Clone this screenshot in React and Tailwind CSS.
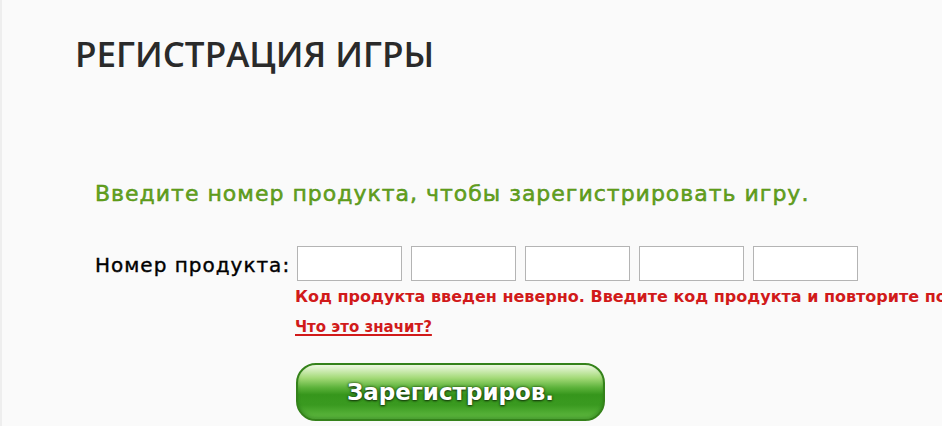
export default function App() {
  const boxes = [0, 1, 2, 3, 4];

  return (
    <div className="w-[942px] h-[426px] overflow-hidden bg-[#fafafa] border-l-2 border-[#eeeeee]">
      <h1 className="pl-[73px] pt-[32px] text-[35px] leading-[44px] font-semibold text-[#2a2a2a] font-['Open_Sans',sans-serif]">
        РЕГИСТРАЦИЯ ИГРЫ
      </h1>

      <p className="pl-[93px] mt-[104px] text-[22px] leading-[28px] tracking-[1px] text-[#64a31c] [-webkit-text-stroke:0.5px_#4e8c12] whitespace-nowrap font-['DejaVu_Sans',sans-serif]">
        Введите номер продукта, чтобы зарегистрировать игру.
      </p>

      <div className="flex mt-[38px] pl-[93px]">
        <span className="w-[202px] shrink-0 text-[20px] leading-[36px] pt-[1px] tracking-[1px] text-black [-webkit-text-stroke:0.4px_#000] whitespace-nowrap font-['DejaVu_Sans',sans-serif]">
          Номер продукта:
        </span>
        <div className="flex flex-col min-w-0">
          <div className="flex gap-[9px]">
            {boxes.map((b) => (
              <input
                key={b}
                type="text"
                className="w-[105px] h-[35px] bg-white border border-[#b4b4b4] outline-none"
              />
            ))}
          </div>
          <p className="mt-[6px] -ml-[2px] text-[16px] leading-[20px] font-bold text-[#d11a1a] whitespace-nowrap font-['DejaVu_Sans',sans-serif]">
            Код продукта введен неверно. Введите код продукта и повторите попытку.
          </p>
          <a
            href="#"
            className="mt-[10px] -ml-[2px] self-start text-[15px] leading-[20px] font-bold text-[#d11a1a] underline decoration-2 underline-offset-2 font-['DejaVu_Sans',sans-serif]"
          >
            Что это значит?
          </a>
          <button
            type="button"
            className="mt-[26px] -ml-[1px] w-[309px] h-[58px] rounded-[20px] border-2 border-[#34821a] bg-[linear-gradient(to_bottom,#eef9e2_0%,#a4da78_24%,#5cb23a_42%,#36961c_55%,#3a9a20_74%,#62bb42_100%)] shadow-[inset_0_-2px_3px_rgba(0,70,0,0.25)] text-white text-[23px] font-bold [text-shadow:0_1px_2px_#173d0c,0_0_3px_#173d0c] font-['DejaVu_Sans',sans-serif]"
          >
            Зарегистриров.
          </button>
        </div>
      </div>
    </div>
  );
}
